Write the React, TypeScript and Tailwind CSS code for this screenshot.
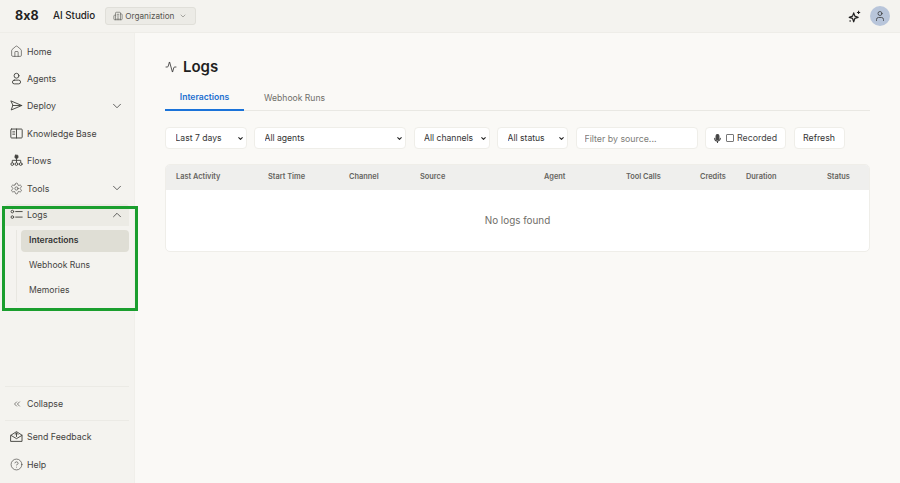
import React from 'react';
import {
  Activity,
  Building2,
  ChevronDown,
  ChevronUp,
  ChevronsLeft,
  CircleHelp,
  House,
  Settings,
  User,
} from 'lucide-react';

type IconProps = { className?: string };

const Svg: React.FC<{ className?: string; children: React.ReactNode }> = ({ className, children }) => (
  <svg
    viewBox="0 0 16 16"
    width="13"
    height="13"
    fill="none"
    stroke="currentColor"
    strokeWidth="1.15"
    strokeLinecap="round"
    strokeLinejoin="round"
    className={`shrink-0 ${className ?? ''}`}
  >
    {children}
  </svg>
);

const AgentIcon: React.FC<IconProps> = props => (
  <Svg {...props}>
    <circle cx="8" cy="4.6" r="3" />
    <rect x="3" y="10" width="10" height="4.6" rx="2.3" />
  </Svg>
);

const DeployIcon: React.FC<IconProps> = props => (
  <Svg {...props}>
    <path d="M1.5 2.5 14.5 8 1.5 13.5 3.4 8Z" />
    <path d="M3.4 8H14.5" />
  </Svg>
);

const BookIcon: React.FC<IconProps> = props => (
  <Svg {...props}>
    <rect x="1" y="2.5" width="14" height="11" rx="1" />
    <path d="M8 2.5v11M3.4 6h2.4M3.4 8.8h2.4" />
  </Svg>
);

const FlowIcon: React.FC<IconProps> = props => (
  <Svg {...props}>
    <rect x="6.2" y="1.5" width="3.6" height="3.6" rx=".8" fill="currentColor" />
    <path d="M8 5.1v5.2M2.8 10.3V7.8h10.4v2.5" />
    <circle cx="2.8" cy="12.4" r="1.7" />
    <circle cx="8" cy="12.4" r="1.7" />
    <circle cx="13.2" cy="12.4" r="1.7" />
  </Svg>
);

const LogsIcon: React.FC<IconProps> = props => (
  <Svg {...props}>
    <circle cx="2.9" cy="4.4" r="1.6" />
    <circle cx="2.9" cy="11.2" r="1.6" />
    <path d="M7 4.4h8M7 11.2h8" />
  </Svg>
);

const FeedbackIcon: React.FC<IconProps> = props => (
  <Svg {...props}>
    <path d="M1.2 6.4 8 2l6.8 4.4V14H1.2Z" />
    <path d="M1.2 6.6 8 10.6l6.8-4" />
    <path d="M8 8V3.8M6.2 5.4 8 3.6l1.8 1.8" />
  </Svg>
);

const navItems = [
  { label: 'Home', icon: House },
  { label: 'Agents', icon: AgentIcon },
  { label: 'Deploy', icon: DeployIcon, caret: true },
  { label: 'Knowledge Base', icon: BookIcon },
  { label: 'Flows', icon: FlowIcon },
  { label: 'Tools', icon: Settings, caret: true },
];

const columns = [
  { label: 'Last Activity', width: 'w-[92px]' },
  { label: 'Start Time', width: 'w-[81px]' },
  { label: 'Channel', width: 'w-[71px]' },
  { label: 'Source', width: 'w-[124px]' },
  { label: 'Agent', width: 'w-[82px]' },
  { label: 'Tool Calls', width: 'w-[74px]' },
  { label: 'Credits', width: 'w-[46px]' },
  { label: 'Duration', width: 'w-[81px]' },
  { label: 'Status', width: 'w-[40px]' },
];

const NavRow: React.FC<{ label: string; icon: React.ElementType; caret?: boolean }> = ({ label, icon: Icon, caret }) => (
  <div className="flex h-[27.4px] items-center pl-[10px] pr-[10px] text-[#44433f]">
    <Icon size={13} strokeWidth={1.2} className="shrink-0" />
    <span className="ml-[4px] flex-1 text-[8.8px]">{label}</span>
    {caret && <ChevronDown size={14} strokeWidth={1.3} className="text-[#333]" />}
  </div>
);

const FilterSelect: React.FC<{ label: string; width: string }> = ({ label, width }) => (
  <div className={`relative ${width}`}>
    <select className="block h-[22px] w-full appearance-none rounded-[4px] border border-[#efeee9] bg-white pl-[9.5px] text-[8.6px] text-[#333] outline-none">
      <option>{label}</option>
    </select>
    <ChevronDown size={7} strokeWidth={3.6} className="pointer-events-none absolute right-[3px] top-[8px] text-[#222]" />
  </div>
);

export default function App() {
  return (
    <div className="relative flex h-[483px] w-[900px] flex-col overflow-hidden bg-[#faf9f6] font-['Inter',sans-serif]">
      <header className="flex h-[33px] shrink-0 items-center border-b border-[#eeede8] bg-[#f4f3ef] pl-[15px] pr-[10px]">
        <span className="w-[38px] text-[12.5px] font-bold text-[#222] [font-feature-settings:'calt'_0]">8x8</span>
        <span className="text-[9.8px] font-medium text-[#222]">AI Studio</span>
        <div className="ml-[10px] flex h-[18px] w-[91px] items-center rounded-[3px] border border-[#e0dfd9] bg-[#ecebe6] pl-[7px] text-[#55544f]">
          <Building2 size={10} strokeWidth={1.4} />
          <span className="ml-[2px] text-[8.2px]">Organization</span>
          <ChevronDown size={8} strokeWidth={1.4} className="ml-[5px]" />
        </div>
        <div className="ml-auto flex items-center gap-[9px]">
          <svg viewBox="0 0 16 16" width="13" height="13" fill="none" stroke="#222" strokeWidth="1.5" strokeLinejoin="round">
            <path d="M7 3.5 8.4 7.6 12.5 9 8.4 10.4 7 14.5 5.6 10.4 1.5 9 5.6 7.6Z" />
            <path d="M13 1v4M11 3h4" strokeWidth="1.3" />
            <circle cx="2.6" cy="13.6" r="1" fill="#222" stroke="none" />
          </svg>
          <div className="flex h-[20px] w-[20px] items-center justify-center rounded-full bg-[#b8c5da] text-[#333]">
            <User size={12} strokeWidth={1.5} />
          </div>
        </div>
      </header>

      <div className="flex min-h-0 flex-1">
        <aside className="flex w-[135px] shrink-0 flex-col border-r border-[#f0efea] bg-[#f4f3ef] pt-[4.5px]">
          {navItems.map(item => (
            <NavRow key={item.label} {...item} />
          ))}
          <div className="mx-[5px] mt-[2px] flex h-[22px] items-center rounded-t-[4px] bg-[#ecebe5] pl-[5px] pr-[5px] text-[#44433f]">
            <LogsIcon />
            <span className="ml-[4px] flex-1 text-[8.8px]">Logs</span>
            <ChevronUp size={14} strokeWidth={1.3} className="text-[#333]" />
          </div>
          <div className="ml-[16px] mr-[5px] mt-[4px] flex flex-col gap-[3px] border-l border-[#e8e7e1] pl-[4px]">
            <div className="flex h-[22px] items-center rounded-[4px] bg-[#dfded5] pl-[8px] text-[8.6px] font-semibold text-[#333]">Interactions</div>
            <div className="flex h-[22px] items-center pl-[8px] text-[8.6px] text-[#44433f]">Webhook Runs</div>
            <div className="flex h-[22px] items-center pl-[8px] text-[8.6px] text-[#44433f]">Memories</div>
          </div>

          <div className="mt-auto pb-[5px]">
            <div className="mx-[5px] border-t border-[#ebeae5]" />
            <div className="flex h-[33px] items-center pl-[12px] text-[#44433f]">
              <ChevronsLeft size={10} strokeWidth={1.6} />
              <span className="ml-[5px] text-[8.8px]">Collapse</span>
            </div>
            <div className="mx-[5px] mb-[2px] border-t border-[#ebeae5]" />
            <NavRow label="Send Feedback" icon={FeedbackIcon} />
            <NavRow label="Help" icon={CircleHelp} />
          </div>
        </aside>

        <main className="flex-1 px-[30px] pt-[23px]">
          <div className="flex h-[22px] items-center gap-[6px] text-[#1f1f1f]">
            <Activity size={12} strokeWidth={1.5} />
            <h1 className="text-[15px] font-semibold">Logs</h1>
          </div>

          <div className="mt-[8px] flex h-[25px] border-b border-[#e9e8e3] text-[8.6px]">
            <div className="-mb-px flex w-[79px] items-center justify-center border-b-2 border-[#1a73d9] font-semibold text-[#1a6fd0]">Interactions</div>
            <div className="flex items-center pl-[20px] text-[#6f6e69]">Webhook Runs</div>
          </div>

          <div className="mt-[16px] flex items-center gap-[7.5px]">
            <FilterSelect label="Last 7 days" width="w-[81.5px]" />
            <FilterSelect label="All agents" width="w-[152px]" />
            <FilterSelect label="All channels" width="w-[76px]" />
            <FilterSelect label="All status" width="w-[71px]" />
            <input
              placeholder="Filter by source..."
              className="h-[22px] w-[122px] rounded-[4px] border border-[#efeee9] bg-white pl-[8px] text-[8.8px] outline-none placeholder:text-[#7d7c78]"
            />
            <div className="flex h-[22px] w-[81px] items-center rounded-[4px] border border-[#efeee9] bg-white pl-[7px] text-[#444]">
              <svg viewBox="0 0 16 16" width="9" height="9" fill="none" stroke="#444" strokeWidth="2" strokeLinecap="round">
                <rect x="5.5" y="1" width="5" height="9" rx="2.5" fill="#444" />
                <path d="M3 7.5a5 5 0 0 0 10 0M8 12.5V15" />
              </svg>
              <input type="checkbox" className="ml-[4px] h-[8px] w-[8px] appearance-none rounded-[1px] border border-[#777] bg-white" />
              <span className="ml-[3px] text-[8.8px]">Recorded</span>
            </div>
            <button className="h-[22px] w-[51px] rounded-[4px] border border-[#efeee9] bg-white text-[8.8px] text-[#333]">Refresh</button>
          </div>

          <div className="mt-[15px] overflow-hidden rounded-[5px] border border-[#efeee9] bg-white">
            <div className="flex h-[25px] items-center bg-[#efefed] pb-px pl-[10px] text-[7.4px] font-semibold text-[#66655f]">
              {columns.map(col => (
                <div key={col.label} className={col.width}>{col.label}</div>
              ))}
            </div>
            <div className="flex h-[61px] items-center justify-center text-[9.9px] text-[#6f6e69]">No logs found</div>
          </div>
        </main>
      </div>

      {/* annotation box over the Logs group */}
      <div className="absolute left-[2px] top-[206px] h-[105px] w-[136px] border-[3px] border-[#1a9e2e]" />
    </div>
  );
}
